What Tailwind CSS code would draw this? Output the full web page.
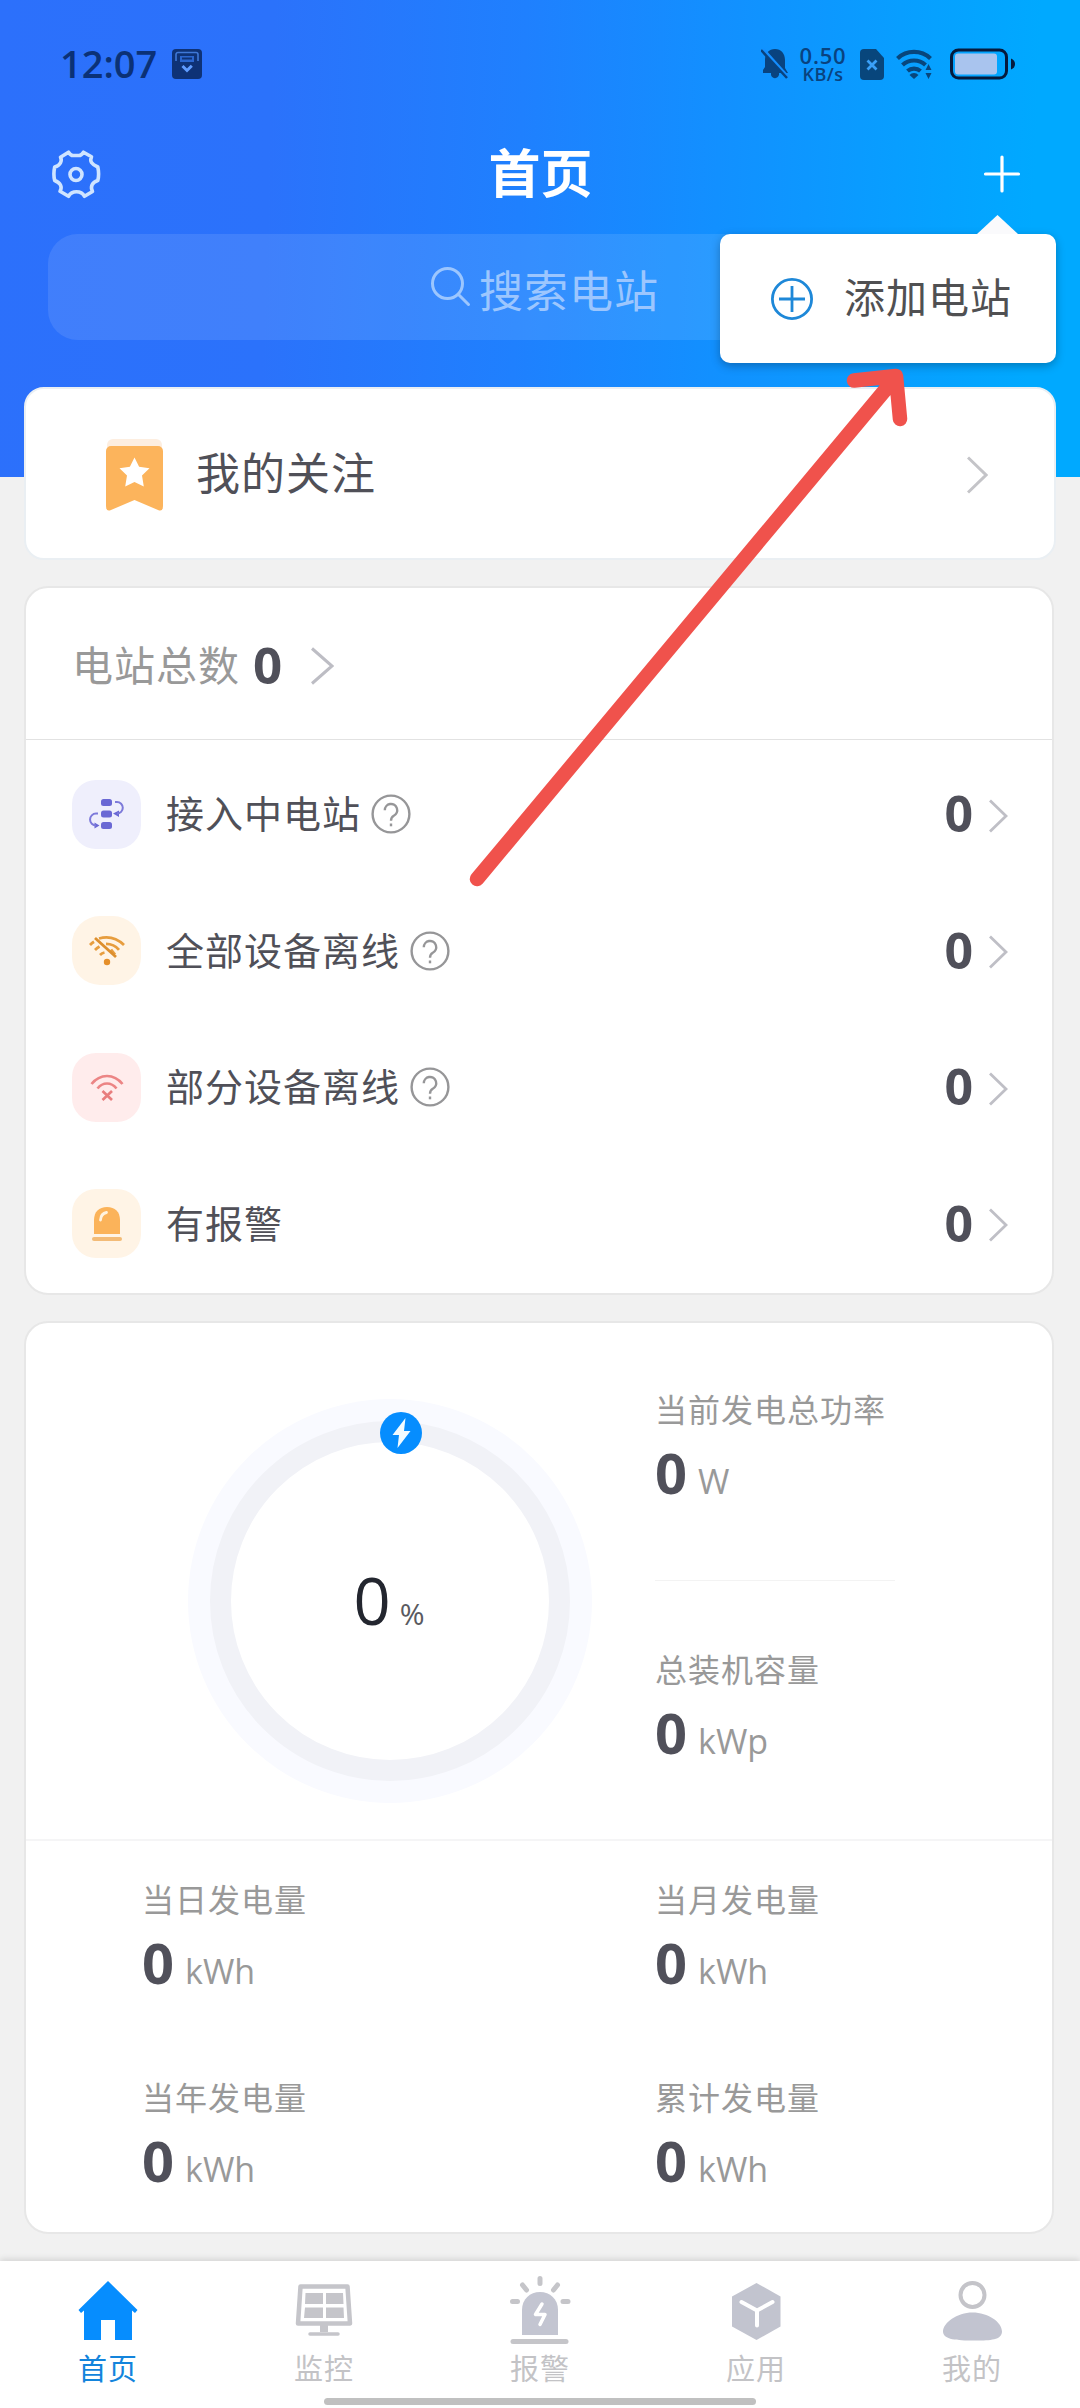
<!DOCTYPE html>
<html lang="zh-CN">
<head>
<meta charset="utf-8">
<title>首页</title>
<script src="https://cdn.jsdelivr.net/npm/@tailwindcss/browser@4"></script>
</head>
<body class="bg-[#f1f1f1] font-['Noto_Sans_CJK_SC',sans-serif]">
<div class="relative flex h-[2408px] w-[1080px] flex-col overflow-hidden">

  <!-- Header -->
  <header class="h-[477px] shrink-0 bg-[linear-gradient(92deg,#2c70fb_0%,#2b72fb_25%,#1f80fe_48%,#1290ff_66%,#00a9ff_95%)]">
    <div class="flex h-32 items-center justify-between pl-[60px] pr-[64px] text-[#0a3a80]">
      <div class="flex items-center gap-[15px]">
        <span class="mb-[2px] font-['Open_Sans',sans-serif] text-[38px] font-semibold leading-none text-[#0b3176]">12:07</span>
        <svg class="size-[30px]" viewBox="0 0 30 30"><rect width="30" height="30" rx="4" fill="#0e3276"/><path d="M4 12V5.500a2 2 0 0 1 2-2h18a2 2 0 0 1 2 2V12" fill="none" stroke="#3f78d8" stroke-width="1.600"/><rect x="8" y="7" width="14" height="6" fill="#2a66cf"/><path d="M10 9.500h10" stroke="#0e3276" stroke-width="2"/><path d="m10.500 17 4.500 4.500 4.800-4.800" fill="none" stroke="#5f9cff" stroke-width="3"/></svg>
      </div>
      <div class="flex items-center font-['Open_Sans',sans-serif] text-[#09437f]">
        <svg class="mr-[9px] h-[32px] w-[28px]" viewBox="0 0 28 32"><path d="M14 1c6 0 10 4.500 10 11v8l3 5H18a4 4 0 0 1-8 2v-2H2v-3l2-3v-7C4 5.500 8 1 14 1Z" fill="#09437f"/><path d="m2 1 25 28" stroke="#148eff" stroke-width="3"/><path d="m0 2 26 28" stroke="#09437f" stroke-width="2.500"/></svg>
        <div class="mr-3 flex w-[50px] flex-col items-center">
          <span class="text-[22px] font-semibold leading-[20px] tracking-[0.800px]">0.50</span>
          <span class="text-[18px] font-semibold leading-[18px] tracking-[0.500px]">KB/s</span>
        </div>
        <svg class="mr-3 h-[31px] w-[24px]" viewBox="0 0 24 31"><path d="M4 0h12l8 9v18a4 4 0 0 1-4 4H4a4 4 0 0 1-4-4V4a4 4 0 0 1 4-4Z" fill="#08467c"/><path d="m7.500 11.500 9 9m0-9-9 9" stroke="#3aa0f8" stroke-width="2.800"/></svg>
        <svg class="mr-[17px] h-[30px] w-[37px]" viewBox="0 0 37 30"><g fill="none" stroke="#08467c" stroke-width="4.200"><path d="M1.500 9.500a24 24 0 0 1 33 0"/><path d="M6.500 16a17 17 0 0 1 23 0"/><path d="M11.500 22a10 10 0 0 1 13 0"/></g><path d="M13.500 26a6 6 0 0 1 9 0L18 30Z" fill="#08467c"/><path d="m29.500 21 3-6 3 6Zm0 3 3 6 3-6Z" fill="#08467c"/></svg>
        <svg class="h-[32px] w-[66px]" viewBox="0 0 66 32"><rect x="1.500" y="2" width="55" height="28" rx="7" fill="none" stroke="#061a3c" stroke-width="3"/><rect x="5" y="5.500" width="42" height="21" rx="3" fill="#a9c4ee"/><path d="M61 10.500q4 1.500 4 5.500t-4 5.500Z" fill="#061a3c"/></svg>
      </div>
    </div>
    <div class="mt-[12px] flex h-[68px] items-center justify-between pl-[51px] pr-[58px]">
      <svg class="size-[50px]" viewBox="0 0 50 50" fill="none" stroke="#cfe4ff" stroke-width="3.600" stroke-linejoin="round"><path d="M17.500 3.200q2 3.300 4.500 3.300h6q2.500 0 4.500-3.300l8 4.500q-1.500 3.500 0 5.800t6.300 4.500q.8 3.500.8 7t-.8 6.500q-4.500 1.500-5.800 4.500t.5 6.500l-8 4.800q-2.500-4.500-8-4.500t-8 4.500l-8.500-5q2-3.500.5-6.300t-5.800-4.500q-.8-3-.8-6.500t.8-7q4.300-1.200 5.800-4.300t0-5.500Z"/><circle cx="25" cy="25.500" r="6"/></svg>
      <h1 class="mb-[7px] mr-[2px] text-[52px] font-bold leading-[68px] text-white">首页</h1>
      <svg class="size-10" viewBox="0 0 40 40" stroke="#fff" stroke-width="3.200" stroke-linecap="round"><path d="M20 3v34M3.500 20h33"/></svg>
    </div>
    <div class="mx-12 mt-[26px] flex h-[106px] items-center rounded-[30px] bg-white/10 pl-[383px] text-[#9cc6fe]">
      <svg class="size-[40px]" viewBox="0 0 40 40" fill="none" stroke="currentColor" stroke-width="3" stroke-linecap="round"><circle cx="16.500" cy="16.500" r="15"/><path d="m27.500 27.500 10 10"/></svg>
      <span class="ml-[8px] mt-[3px] text-[44px] leading-[60px] tracking-[1px]">搜索电站</span>
    </div>
  </header>

  <main class="-mt-[90px] flex flex-1 flex-col px-6">
    <!-- Favourites -->
    <section class="flex h-[173px] items-center rounded-[20px] border-2 border-[#eaeff3] bg-white pl-[80px] pr-[66px]">
      <svg class="mt-[3px] h-[72px] w-[57px]" viewBox="0 0 57 72"><rect x="1" y="0" width="55" height="20" rx="6" fill="#fdeee0"/><path d="M5 7h47a5 5 0 0 1 5 5v55q0 6-5 4L28.500 61 5 71q-5 2-5-4V12a5 5 0 0 1 5-5Z" fill="#fcb45c"/><path d="m28.500 18.500 4.600 9.200 10.400 1.500-7.500 7.200 1.800 11.100-9.300-4.400-9.300 4.400 1.800-11.100-7.500-7.200 10.400-1.500Z" fill="#fff"/></svg>
      <span class="mb-[5px] ml-[33px] flex-1 text-[44px] leading-[60px] tracking-[1px] text-[#505058]">我的关注</span>
      <svg class="mt-[3px] h-[38px] w-[21px]" viewBox="0 0 21 38" fill="none" stroke="#c4c4c8" stroke-width="3"><path d="m1 1.500 18 17.500L1 36.500"/></svg>
    </section>

    <!-- Station counts -->
    <section class="mr-[2px] mt-[26px] h-[709px] rounded-[24px] border-2 border-[#e7e7e7] bg-white">
      <div class="flex h-[152px] items-center border-b border-[#e2e2e2] pl-[46px]">
        <span class="mb-[2px] text-[41px] leading-[60px] tracking-[1px] text-[#999]">电站总数</span>
        <b class="ml-[13px] font-['Open_Sans',sans-serif] text-[51px] leading-[60px] text-[#50505a]">0</b>
        <svg class="ml-[29px] mt-[5px] h-[38px] w-[23px]" viewBox="0 0 23 38" fill="none" stroke="#bdbdc4" stroke-width="3"><path d="m1 1.500 20 17.500L1 36.500"/></svg>
      </div>
      <ul class="pt-[6px] text-[38px] tracking-[1px] text-[#505058]">
        <li class="flex h-[136.500px] items-center pl-[46px] pr-[44px]">
          <span class="flex size-[69px] items-center justify-center rounded-[24px] bg-[#efeffc]">
            <svg class="h-[32px] w-[36px]" viewBox="0 0 36 32"><g fill="#6a68d4"><rect x="12" y="1" width="11" height="7" rx="2.500"/><rect x="12" y="12.500" width="11" height="7" rx="2.500"/><rect x="12" y="24" width="11" height="7" rx="2.500"/><path d="m24 15.500 6-3v6.500ZM10.500 27.500l-5-3v6Z"/></g><path d="M26 4h2a5.800 5.800 0 0 1 0 11.600M9 15.600H7a5.800 5.800 0 0 0 0 11.900" fill="none" stroke="#7d7ada" stroke-width="2"/></svg>
          </span>
          <span class="mb-[4px] ml-[25px] leading-[56px]">接入中电站</span>
          <svg class="ml-[10px] size-10" viewBox="0 0 40 40" fill="none" stroke="#969698" stroke-width="2.400"><circle cx="20" cy="20" r="18.400"/><path d="M13.800 16.200a6.200 6.200 0 1 1 9 5.500q-2.800 1.600-2.800 5"/><path d="M20 29.500v2.800"/></svg>
          <b class="mb-[2px] ml-auto font-['Open_Sans',sans-serif] text-[50px] leading-[60px] text-[#50505a]">0</b>
          <svg class="ml-[15px] mt-[3px] h-[34px] w-[19px]" viewBox="0 0 19 34" fill="none" stroke="#bfbfc6" stroke-width="2.800"><path d="m1 1.500 16 15.500L1 32.500"/></svg>
        </li>
        <li class="flex h-[136.500px] items-center pl-[46px] pr-[44px]">
          <span class="flex size-[69px] items-center justify-center rounded-[28px] bg-[#fff4e6]">
            <svg class="h-[32px] w-[38px]" viewBox="0 0 38 32"><g fill="none" stroke="#e79d3e" stroke-width="2.800"><path d="M2 10q2-2 4-3.200M11 3.500q14-4 25 6.500M7 15q2-2 4.500-3.500M18 8.800q8 0 13 6M12 20q2-2 4.500-2.500M23 14.500l4 5"/><path d="m7 3 21 19" stroke="#dd8f2e"/></g><circle cx="19" cy="27" r="3.200" fill="#e58f2a"/></svg>
          </span>
          <span class="mb-[4px] ml-[25px] leading-[56px]">全部设备离线</span>
          <svg class="ml-[10px] size-10" viewBox="0 0 40 40" fill="none" stroke="#969698" stroke-width="2.400"><circle cx="20" cy="20" r="18.400"/><path d="M13.800 16.200a6.200 6.200 0 1 1 9 5.500q-2.800 1.600-2.800 5"/><path d="M20 29.500v2.800"/></svg>
          <b class="mb-[2px] ml-auto font-['Open_Sans',sans-serif] text-[50px] leading-[60px] text-[#50505a]">0</b>
          <svg class="ml-[15px] mt-[3px] h-[34px] w-[19px]" viewBox="0 0 19 34" fill="none" stroke="#bfbfc6" stroke-width="2.800"><path d="m1 1.500 16 15.500L1 32.500"/></svg>
        </li>
        <li class="flex h-[136.500px] items-center pl-[46px] pr-[44px]">
          <span class="flex size-[69px] items-center justify-center rounded-[24px] bg-[#ffecec]">
            <svg class="h-[28px] w-[34px]" viewBox="0 0 34 28" fill="none" stroke="#ec8585" stroke-width="2.700"><path d="M1.500 11Q8 3 17 3t15.500 8M7.500 15.500q4-5 9.500-5t9.500 5"/><path d="m12.500 18 9.500 9m0-9-9.500 9" stroke="#e87d7d"/></svg>
          </span>
          <span class="mb-[4px] ml-[25px] leading-[56px]">部分设备离线</span>
          <svg class="ml-[10px] size-10" viewBox="0 0 40 40" fill="none" stroke="#969698" stroke-width="2.400"><circle cx="20" cy="20" r="18.400"/><path d="M13.800 16.200a6.200 6.200 0 1 1 9 5.500q-2.800 1.600-2.800 5"/><path d="M20 29.500v2.800"/></svg>
          <b class="mb-[2px] ml-auto font-['Open_Sans',sans-serif] text-[50px] leading-[60px] text-[#50505a]">0</b>
          <svg class="ml-[15px] mt-[3px] h-[34px] w-[19px]" viewBox="0 0 19 34" fill="none" stroke="#bfbfc6" stroke-width="2.800"><path d="m1 1.500 16 15.500L1 32.500"/></svg>
        </li>
        <li class="flex h-[136.500px] items-center pl-[46px] pr-[44px]">
          <span class="flex size-[69px] items-center justify-center rounded-[24px] bg-[#fff4e6]">
            <svg class="h-[36px] w-[32px]" viewBox="0 0 32 36"><path d="M3 28V14C3 6 8 1 16 1s13 5 13 13v14Z" fill="#fbb35a"/><path d="M9.500 14q.5-6.500 6-7.500" fill="none" stroke="#fff3e0" stroke-width="2.800" stroke-linecap="round"/><rect x="1" y="31" width="30" height="4" rx="2" fill="#f3bb77"/></svg>
          </span>
          <span class="mb-[4px] ml-[25px] leading-[56px]">有报警</span>
          <b class="mb-[2px] ml-auto font-['Open_Sans',sans-serif] text-[50px] leading-[60px] text-[#50505a]">0</b>
          <svg class="ml-[15px] mt-[3px] h-[34px] w-[19px]" viewBox="0 0 19 34" fill="none" stroke="#bfbfc6" stroke-width="2.800"><path d="m1 1.500 16 15.500L1 32.500"/></svg>
        </li>
      </ul>
    </section>

    <!-- Generation -->
    <section class="mr-[2px] mt-[26px] h-[913px] rounded-[24px] border-2 border-[#e7e7e7] bg-white text-[32px] text-[#999]">
      <div class="grid h-[518px] grid-cols-[629px_1fr] border-b-2 border-[#f5f5f6]">
        <div class="relative ml-[162px] mt-[76px] flex size-[404px] items-center justify-center rounded-full bg-[#f9faff]">
          <div class="flex size-[360px] items-center justify-center rounded-full border-[21px] border-[#f1f2f7] bg-white font-['Open_Sans',sans-serif]">
            <p class="mb-[2px] mr-[2px] flex items-baseline"><span class="text-[65px] leading-[80px] text-[#23262f]">0</span><span class="ml-[9px] text-[30px] text-[#5a5a60]">%</span></p>
          </div>
          <svg class="absolute left-[192px] top-[13px] size-[42px]" viewBox="0 0 42 42"><circle cx="21" cy="21" r="21" fill="#068dfe"/><path d="M25.500 6 12.500 23h6.500l-1.500 13L30.500 19H24Z" fill="#f2fbff"/></svg>
        </div>
        <div class="pt-[61px]">
          <p class="leading-[48px] tracking-[1px]">当前发电总功率</p>
          <p class="flex items-baseline gap-[11px] font-['Open_Sans',sans-serif] leading-[80px]"><b class="text-[56px] text-[#50505a]">0</b><span class="text-[34px]">W</span></p>
          <div class="mt-[59px] w-[240px] border-t border-[#f3f3f3]"></div>
          <p class="mt-[63px] leading-[48px] tracking-[1px]">总装机容量</p>
          <p class="flex items-baseline gap-[11px] font-['Open_Sans',sans-serif] leading-[80px]"><b class="text-[56px] text-[#50505a]">0</b><span class="text-[34px]">kWp</span></p>
        </div>
      </div>
      <div class="grid grid-cols-[513px_1fr] gap-y-[61px] pl-[116px] pt-[33px]">
        <div>
          <p class="leading-[48px] tracking-[1px]">当日发电量</p>
          <p class="flex items-baseline gap-[11px] font-['Open_Sans',sans-serif] leading-[80px]"><b class="text-[56px] text-[#50505a]">0</b><span class="text-[34px]">kWh</span></p>
        </div>
        <div>
          <p class="leading-[48px] tracking-[1px]">当月发电量</p>
          <p class="flex items-baseline gap-[11px] font-['Open_Sans',sans-serif] leading-[80px]"><b class="text-[56px] text-[#50505a]">0</b><span class="text-[34px]">kWh</span></p>
        </div>
        <div>
          <p class="leading-[48px] tracking-[1px]">当年发电量</p>
          <p class="flex items-baseline gap-[11px] font-['Open_Sans',sans-serif] leading-[80px]"><b class="text-[56px] text-[#50505a]">0</b><span class="text-[34px]">kWh</span></p>
        </div>
        <div>
          <p class="leading-[48px] tracking-[1px]">累计发电量</p>
          <p class="flex items-baseline gap-[11px] font-['Open_Sans',sans-serif] leading-[80px]"><b class="text-[56px] text-[#50505a]">0</b><span class="text-[34px]">kWh</span></p>
        </div>
      </div>
    </section>
  </main>

  <!-- Tab bar -->
  <footer class="relative h-[147px] shrink-0 bg-white shadow-[0_-2px_6px_rgba(0,0,0,0.12)]">
    <nav class="grid grid-cols-5 pt-[13px] text-[29px] leading-[38px] tracking-[1px] text-[#c3c3c6]">
      <a class="flex flex-col items-center text-[#1384dc]">
        <svg class="h-[74px] w-[62px]" viewBox="0 0 62 74"><path d="M31 7 60.500 36l-2.500 3-3-2.500V66H38V46H24v20H7V36.500L4 39l-2.500-3Z" fill="#068dfe"/></svg>
        首页
      </a>
      <a class="flex flex-col items-center">
        <svg class="h-[74px] w-[62px]" viewBox="0 0 62 74"><path d="M7.500 12.500h47l2.500 37H5Z" fill="none" stroke="#c5c5ca" stroke-width="4.500" stroke-linejoin="round"/><path d="M12.500 19H30v11H12Zm20.500 0h17l.5 11H33ZM12 33.500h18V44H11Zm21 0h17.500L51 44H33ZM27 50h8v8h-8Z" fill="#c5c5ca"/><path d="M17 60h28" stroke="#c5c5ca" stroke-width="3.500" stroke-linecap="round"/></svg>
        监控
      </a>
      <a class="flex flex-col items-center">
        <svg class="h-[74px] w-[62px]" viewBox="0 0 62 74"><path d="M13 61V36c0-11 8-18 18-18s18 7 18 18v25Z" fill="#c3c5d1"/><g stroke="#c5c5c9" stroke-width="5" stroke-linecap="round"><path d="M4 67.500h53"/><path d="M31 4.500v5M13.500 11l4 5M48.500 11l-4 5M3.500 27.500h5M54 27.500h5"/></g><path d="m33 30-6.500 10.500h9.500L31 50.500" fill="none" stroke="#fff" stroke-width="3.500" stroke-linejoin="round" stroke-linecap="round"/></svg>
        报警
      </a>
      <a class="flex flex-col items-center">
        <svg class="h-[74px] w-[62px]" viewBox="0 0 62 74"><path d="m31.500 9 24 13.500v30L31.500 66 7 52.500v-30Z" fill="#c2c4cf"/><path d="m16.500 28 15.500 8.500L47.500 28M32 36.500v15" fill="none" stroke="#fff" stroke-width="4" stroke-linecap="round"/></svg>
        应用
      </a>
      <a class="flex flex-col items-center">
        <svg class="h-[74px] w-[62px]" viewBox="0 0 62 74"><circle cx="31.500" cy="21" r="12" fill="none" stroke="#c4c4c9" stroke-width="4"/><path d="M31.500 38.500C47 38.500 61 48 61 57.500S46 66.500 31.500 66.500 2 66 2 57.500 16 38.500 31.500 38.500Z" fill="#c2c4d0"/></svg>
        我的
      </a>
    </nav>
    <div class="absolute left-[324px] top-[137px] h-[7px] w-[432px] rounded-full bg-[#c0c0c0]"></div>
  </footer>

  <!-- Add menu -->
  <div class="absolute left-[720px] top-[234px] flex h-[129px] w-[336px] items-center rounded-[10px] bg-white pl-[51px] shadow-[0_3px_10px_rgba(0,0,0,0.28)]">
    <svg class="absolute -top-[19px] left-[257px] h-[19px] w-[41px]" viewBox="0 0 41 19"><path d="M20.500 0 41 19H0Z" fill="#fafafc"/></svg>
    <svg class="size-[42px]" viewBox="0 0 42 42" fill="none" stroke="#1e88d8" stroke-width="2.800"><circle cx="21" cy="21" r="19.600"/><path d="M21 8v26M8 21h26"/></svg>
    <span class="mb-[7px] ml-[31px] text-[41px] leading-[60px] tracking-[1px] text-[#505052]">添加电站</span>
  </div>

  <!-- Pointer arrow -->
  <svg class="absolute left-[460px] top-[360px] h-[540px] w-[460px]" viewBox="460 360 460 540" fill="none" stroke="#f0524c" stroke-width="14.500" stroke-linecap="round" stroke-linejoin="round"><path d="M477 879 896 377M854 380.500l42-4.500 4 43"/></svg>
</div>
</body>
</html>
